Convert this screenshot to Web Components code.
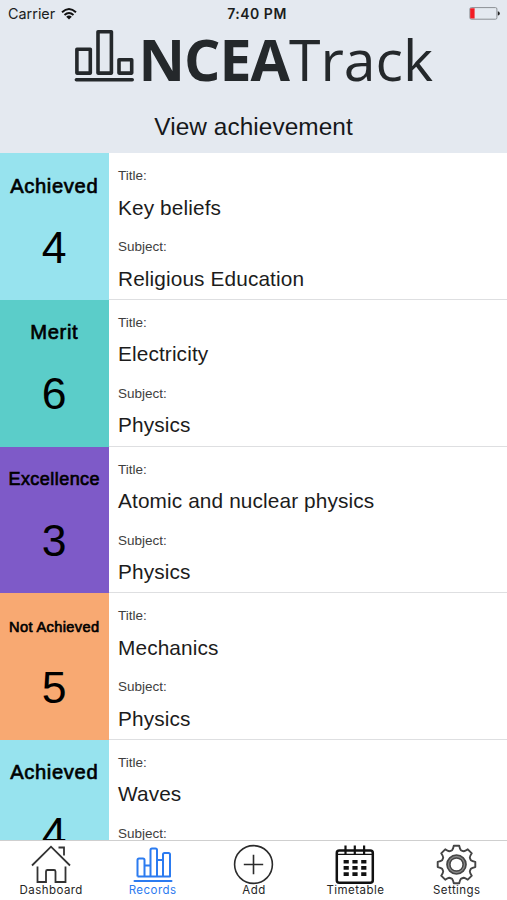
<!DOCTYPE html>
<html lang="en">
<head>
<meta charset="utf-8">
<title>NCEATrack</title>
<style>
  body {
    margin: 0;
    background: #fff;
    color: #000;
    font-family: "Liberation Sans", Arial, sans-serif;
  }
</style>
</head>
<body>

<track-app></track-app>

<script>
/*
status-bar: carrier, time and battery
*/
const statusTemplate = document.createElement("template");

statusTemplate.innerHTML = `
<style>
  :host {
    display: grid;
    grid-template-columns: 1fr auto 1fr;
    align-items: center;
    height: 27px;
    padding: 0 7px 0 8px;
    font: 14.4px/27px Inter, sans-serif;
    color: #1b1d20;
  }
  .carrier { display: flex; align-items: center; gap: 6px; }
  .time { padding: 1px 0 0 6px; font-weight: 600; font-size: 14px; line-height: 26px; letter-spacing: .5px; }
  .battery { justify-self: end; }
  svg { display: block; }
</style>
<div class="carrier">
  <span>Carrier</span>
  <svg width="16" height="12" viewBox="0 0 16 12" fill="none" stroke="#111" stroke-width="1.9">
    <path d="M1 4.3Q8-2.2 15 4.3M3.5 7Q8 2.8 12.5 7"/>
    <path d="M5.2 8.7Q8 6.4 10.8 8.7L8 11.5Z" fill="#111" stroke="none"/>
  </svg>
</div>
<div class="time">7:40 PM</div>
<svg class="battery" width="31" height="13" viewBox="0 0 31 13">
  <rect x=".9" y=".6" width="27" height="11.6" rx="1.4" fill="none" stroke="#8c9094"/>
  <path d="M2 1.3h3.6v10.2H2q-.8 0-.8-1V2.3q0-1 .8-1z" fill="#f21c24"/>
  <path d="M28.8 4.2q2 .4 2 2.2t-2 2.2z" fill="#222"/>
</svg>
`;

class StatusBar extends HTMLElement {
  constructor() {
    super();
    this.attachShadow({ mode: "open" });
    this.shadowRoot.appendChild(statusTemplate.content.cloneNode(true));
  }
}

window.customElements.define("status-bar", StatusBar);

/*
page-header: logo, the slot takes the title of the screen
*/
const headerTemplate = document.createElement("template");

headerTemplate.innerHTML = `
<style>
  :host {
    display: block;
    box-sizing: border-box;
    height: 153.3px;
    background: #e4e9f0;
  }
  .logo {
    display: flex;
    height: 64px;
    padding-left: 74px;
    color: #24282b;
    font: 57.2px/65px "Open Sans", sans-serif;
    white-space: nowrap;
  }
  .logo svg { flex: none; margin: 2px 3.5px 0 0; }
  .logo b { font-weight: 700; letter-spacing: -1px; }
  h1 {
    margin: 0;
    padding-top: 20.5px;
    text-align: center;
    font-size: 24.4px;
    font-weight: 400;
    line-height: 29px;
    letter-spacing: .06px;
    color: #16181a;
  }
</style>
<status-bar></status-bar>
<div class="logo">
  <svg width="61" height="54" viewBox="0 0 61 54" fill="none" stroke="#24282b" stroke-width="3.6" stroke-linejoin="round" stroke-linecap="round">
    <path d="M2.9 20.2h13.4v23.9H2.9zM24 2.8h13.4v41.3H24zM45 30.7h12.7v13.4H45zM2.4 50.7h55.8"/>
  </svg>
  <b>NCEA</b><span>Track</span>
</div>
<h1><slot></slot></h1>
`;

class PageHeader extends HTMLElement {
  constructor() {
    super();
    this.attachShadow({ mode: "open" });
    this.shadowRoot.appendChild(headerTemplate.content.cloneNode(true));
  }
}

window.customElements.define("page-header", PageHeader);

/*
record-row

attributes:
- grade (achieved, merit, excellence, not-achieved)
- credits

slots:
- title
- subject
*/
const grades = {
  "achieved": { label: "Achieved", color: "#97e3ee", size: 20.2, spacing: .65 },
  "merit": { label: "Merit", color: "#5bcdc9", size: 20.2, spacing: .65 },
  "excellence": { label: "Excellence", color: "#7e5ac8", size: 18, spacing: .45 },
  "not-achieved": { label: "Not Achieved", color: "#f8a972", size: 14.6, spacing: .38 }
};

const rowTemplate = document.createElement("template");

rowTemplate.innerHTML = `
<style>
  :host {
    display: flex;
    height: 146.67px;
  }
  .grade {
    flex: none;
    width: 108.5px;
    text-align: center;
    background: var(--grade-color);
  }
  .label {
    padding-top: 16.5px;
    line-height: 32px;
    white-space: nowrap;
    -webkit-text-stroke: .65px #000;
  }
  .credits {
    margin-top: 20px;
    font-size: 44.6px;
    line-height: 52px;
  }
  .details {
    flex: 1;
    box-sizing: border-box;
    padding: 14px 0 0 9.5px;
    border-bottom: 1px solid #dedfe1;
  }
  .name { font-size: 13.5px; line-height: 18px; color: #3e3e3e; }
  .value {
    padding: 10.5px 0 18.5px;
    font-size: 20.8px;
    line-height: 24px;
    letter-spacing: .12px;
    color: #1c1c1c;
  }
</style>
<div class="grade">
  <div class="label"></div>
  <div class="credits"></div>
</div>
<div class="details">
  <div class="name">Title:</div>
  <div class="value"><slot name="title"></slot></div>
  <div class="name">Subject:</div>
  <div class="value"><slot name="subject"></slot></div>
</div>
`;

class RecordRow extends HTMLElement {
  constructor() {
    super();
    this.attachShadow({ mode: "open" });
  }

  connectedCallback() {
    this.shadowRoot.appendChild(rowTemplate.content.cloneNode(true));

    const grade = grades[this.getAttribute("grade")];
    const label = this.shadowRoot.querySelector(".label");

    label.textContent = grade.label;
    // long labels shrink so that they stay on one line
    label.style.fontSize = grade.size + "px";
    label.style.letterSpacing = grade.spacing + "px";
    if (grade.size < 16) {
      label.style.lineHeight = "34px";
      label.style.marginBottom = "-2px";
    }
    this.style.setProperty("--grade-color", grade.color);
    this.shadowRoot.querySelector(".credits").textContent = this.getAttribute("credits");
  }
}

window.customElements.define("record-row", RecordRow);

/*
tab-item: the icon comes from the "icon" attribute, the label from the slot
*/
const icons = {
  home: `<g stroke="#333" stroke-width="1.8"><path d="M2 21.5L21 2.7L40 21.5M28.500 3.500H34V11.500M7.500 22.500V38H16V27.500q0-1.500 1.500-1.500h6.500q1.500 0 1.500 1.500V38H35.500V22.500"/></g>`,
  chart: `<g stroke="currentColor" stroke-width="2" stroke-linejoin="round"><path d="M5.500 32.500V16q0-1.500 1.500-1.500h4q1.500 0 1.500 1.500v16.500M18.500 32.500V6q0-1.500 1.500-1.500h3.500q1.500 0 1.500 1.500v26.500M31 32.500V10.500q0-1.500 1.500-1.500h4q1.500 0 1.500 1.500v22zM12.500 21.500h6M25 16h6M5.500 32.500H38"/><path d="M2.500 37h37" stroke-linecap="round"/></g>`,
  plus: `<g stroke="#2b2b2b" stroke-width="1.6"><circle cx="20.5" cy="20.5" r="18.9"/><path d="M20.5 10.8v19.4M10.8 20.5h19.4"/></g>`,
  calendar: `<g stroke="#111" stroke-width="2.5"><rect x="2.800" y="6.500" width="36" height="32.200" rx="2.500"/><path d="M3 10.300h36" stroke-width="1.300"/><path d="M11.500 1.500v9M20.800 1.500v9M30.100 1.500v9" stroke-width="2.200"/><path d="M9.600 17.700h23M9.600 23.900h23M9.600 30.100h23" stroke-width="3.600" stroke-dasharray="5.200 3.600"/></g>`,
  gear: `<g stroke="#454545" stroke-width="1.9" stroke-linejoin="round"><circle cx="20.5" cy="20.5" r="8" stroke="#8a8a8a" stroke-width="3"/><circle cx="20.5" cy="20.5" r="9.5" stroke-width="1.7"/><circle cx="20.5" cy="20.5" r="6.6" stroke-width="1.5"/><path d="M17.800 1.700h5.400q.7 3.300 1.700 4.500 1.300.8 2.900 1.100 1.500-.3 4-2l4 4q-1.900 2.700-2 4.200.3 1.400 1.100 2.700 1.200 1 4.400 1.700v5.200q-3.200.7-4.400 1.700-.8 1.300-1.100 2.700.1 1.500 2 4.200l-4 4q-2.500-1.700-4-2-1.600.3-2.900 1.100-1 1.200-1.700 4.500h-5.400q-.7-3.300-1.700-4.500-1.300-.8-2.900-1.100-1.500.3-4 2l-4-4q1.900-2.700 2-4.200-.3-1.400-1.100-2.700-1.200-1-4.400-1.700v-5.200q3.200-.7 4.400-1.700.8-1.300 1.100-2.700-.1-1.500-2-4.200l4-4q2.500 1.700 4 2 1.600-.3 2.900-1.100 1-1.200 1.700-4.500z"/></g>`
};

const tabTemplate = document.createElement("template");

tabTemplate.innerHTML = `
<style>
  :host {
    display: flex;
    flex-direction: column;
    align-items: center;
    padding-top: 3px;
    color: #252525;
    font: 11.5px/14px Inter, sans-serif;
    letter-spacing: .45px;
  }
  :host([active]) { color: #2b7bf0; }
  svg { display: block; }
  .label { margin-top: -1.5px; padding-left: 1px; }
</style>
<svg width="41" height="41" viewBox="0 0 41 41" fill="none"></svg>
<div class="label"><slot></slot></div>
`;

class TabItem extends HTMLElement {
  constructor() {
    super();
    this.attachShadow({ mode: "open" });
  }

  connectedCallback() {
    this.shadowRoot.appendChild(tabTemplate.content.cloneNode(true));
    this.shadowRoot.querySelector("svg").innerHTML = icons[this.getAttribute("icon")];
  }
}

window.customElements.define("tab-item", TabItem);

/*
tab-bar: five equal columns at the foot of the screen
*/
class TabBar extends HTMLElement {
  constructor() {
    super();
    this.attachShadow({ mode: "open" });
    this.shadowRoot.innerHTML = `
      <style>
        :host {
          display: grid;
          grid-template-columns: repeat(5, 1fr);
          box-sizing: border-box;
          height: 60.5px;
          border-top: 1px solid #cfcfcf;
          background: #fff;
        }
      </style>
      <slot></slot>
    `;
  }
}

window.customElements.define("tab-bar", TabBar);

/*
track-app: header, list of records that is cut by the tab bar, tab bar
*/
class TrackApp extends HTMLElement {
  constructor() {
    super();
    this.attachShadow({ mode: "open" });
    this.shadowRoot.innerHTML = `
      <style>
        :host {
          display: flex;
          flex-direction: column;
          height: 100vh;
          overflow: hidden;
        }
        page-header, tab-bar { flex: none; }
        main { flex: 1; min-height: 0; overflow: hidden; }
      </style>
      <page-header>View achievement</page-header>
      <main>
        <record-row grade="achieved" credits="4">
          <span slot="title">Key beliefs</span>
          <span slot="subject">Religious Education</span>
        </record-row>
        <record-row grade="merit" credits="6">
          <span slot="title">Electricity</span>
          <span slot="subject">Physics</span>
        </record-row>
        <record-row grade="excellence" credits="3">
          <span slot="title">Atomic and nuclear physics</span>
          <span slot="subject">Physics</span>
        </record-row>
        <record-row grade="not-achieved" credits="5">
          <span slot="title">Mechanics</span>
          <span slot="subject">Physics</span>
        </record-row>
        <record-row grade="achieved" credits="4">
          <span slot="title">Waves</span>
        </record-row>
      </main>
      <tab-bar>
        <tab-item icon="home">Dashboard</tab-item>
        <tab-item icon="chart" active>Records</tab-item>
        <tab-item icon="plus">Add</tab-item>
        <tab-item icon="calendar">Timetable</tab-item>
        <tab-item icon="gear">Settings</tab-item>
      </tab-bar>
    `;
  }
}

window.customElements.define("track-app", TrackApp);
</script>
</body>
</html>
